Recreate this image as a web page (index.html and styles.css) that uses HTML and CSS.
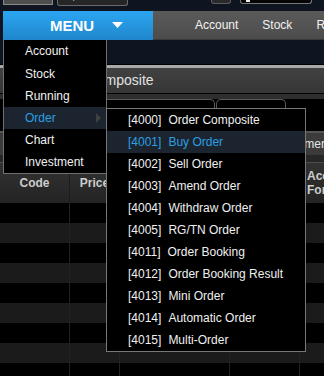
FILE: index.html
```html
<!DOCTYPE html>
<html lang="en">
<head>
  <meta charset="UTF-8">
  <meta name="viewport" content="width=device-width, initial-scale=1.0">
  <title>Order Composite</title>
  <link rel="stylesheet" href="styles.css">
</head>
<body>
  <div class="top-strip">
    <div class="search-input"></div>
    <div class="search-btn">
      <svg width="9" height="9" viewBox="0 0 9 9"><circle cx="3.6" cy="3.6" r="2.6" fill="none" stroke="#fff" stroke-width="1.4"/><path d="M5.5 5.5 L8.3 8.3" stroke="#fff" stroke-width="1.6"/></svg>
      <span>Search</span>
    </div>
    <div class="small-btn">...</div>
    <div class="top-input"><span class="caret"></span></div>
  </div>

  <div class="menubar">
    <div class="menu-btn">
      <span>MENU</span>
      <svg width="11" height="6" viewBox="0 0 11 6"><path d="M0 0 H11 L5.5 6 Z" fill="#fff"/></svg>
    </div>
    <div class="bar-links">
      <span class="bar-link">Account</span>
      <span class="bar-link">Stock</span>
      <span class="bar-link">Running</span>
    </div>
  </div>

  <div class="window">
    <div class="win-title">Order Composite</div>
    <div class="tabs">
      <div class="tab tab-a"></div>
      <div class="tab tab-b"></div>
      <div class="tab tab-c"></div>
    </div>
    <div class="toolbar"><span class="field-label">Customer</span></div>
    <div class="sep"></div>
    <div class="grid-head">
      <div class="col c1">Code</div>
      <div class="col c2">Price</div>
      <div class="col c3"></div>
      <div class="col c4"></div>
      <div class="col c5 left">Acc<br>For</div>
    </div>
    <div class="rows">
      <div class="row"><div class="cell c1"></div><div class="cell c2"></div><div class="cell c3"></div><div class="cell c4"></div><div class="cell c5"></div></div>
      <div class="row"><div class="cell c1"></div><div class="cell c2"></div><div class="cell c3"></div><div class="cell c4"></div><div class="cell c5"></div></div>
      <div class="row"><div class="cell c1"></div><div class="cell c2"></div><div class="cell c3"></div><div class="cell c4"></div><div class="cell c5"></div></div>
      <div class="row"><div class="cell c1"></div><div class="cell c2"></div><div class="cell c3"></div><div class="cell c4"></div><div class="cell c5"></div></div>
      <div class="row"><div class="cell c1"></div><div class="cell c2"></div><div class="cell c3"></div><div class="cell c4"></div><div class="cell c5"></div></div>
      <div class="row"><div class="cell c1"></div><div class="cell c2"></div><div class="cell c3"></div><div class="cell c4"></div><div class="cell c5"></div></div>
      <div class="row"><div class="cell c1"></div><div class="cell c2"></div><div class="cell c3"></div><div class="cell c4"></div><div class="cell c5"></div></div>
      <div class="row"><div class="cell c1"></div><div class="cell c2"></div><div class="cell c3"></div><div class="cell c4"></div><div class="cell c5"></div></div>
      <div class="row"><div class="cell c1"></div><div class="cell c2"></div><div class="cell c3"></div><div class="cell c4"></div><div class="cell c5"></div></div>
    </div>
  </div>

  <!-- main dropdown -->
  <ul class="dropdown">
    <li>Account</li>
    <li>Stock</li>
    <li>Running</li>
    <li class="active">Order<span class="arrow"></span></li>
    <li>Chart</li>
    <li>Investment</li>
  </ul>

  <!-- order submenu -->
  <ul class="submenu">
    <li><span class="code">[4000]</span>Order Composite</li>
    <li class="active"><span class="code">[4001]</span>Buy Order</li>
    <li><span class="code">[4002]</span>Sell Order</li>
    <li><span class="code">[4003]</span>Amend Order</li>
    <li><span class="code">[4004]</span>Withdraw Order</li>
    <li><span class="code">[4005]</span>RG/TN Order</li>
    <li><span class="code">[4011]</span>Order Booking</li>
    <li><span class="code">[4012]</span>Order Booking Result</li>
    <li><span class="code">[4013]</span>Mini Order</li>
    <li><span class="code">[4014]</span>Automatic Order</li>
    <li><span class="code">[4015]</span>Multi-Order</li>
  </ul>
</body>
</html>
```

FILE: styles.css
```css
body {
  margin: 0;
  width: 324px;
  height: 376px;
  overflow: hidden;
  position: relative;
  background-color: #0f1520;
  font-family: 'Liberation Sans', Arial, sans-serif;
  font-size: 12px;
  color: #f0f0f0;
}

/* top strip, mostly scrolled out of view */
.top-strip {
  height: 11px;
  display: flex;
  align-items: flex-end;
  overflow: hidden;
}
.search-input {
  margin-left: 3px;
  width: 48px;
  height: 20px;
  margin-bottom: 6px;
  background: #4e4e4e;
  border: 1px solid #8a8a8a;
  border-top: none;
}
.search-btn {
  margin-left: 4px;
  width: 71px;
  height: 22px;
  margin-bottom: 5px;
  background: #262626;
  border: 1px solid #6a6a6a;
  border-top: none;
  border-radius: 0 0 3px 3px;
  display: flex;
  align-items: flex-end;
  justify-content: center;
  gap: 3px;
  padding-bottom: 4px;
  box-sizing: border-box;
  line-height: 12px;
  font-size: 13px;
}
.small-btn {
  margin-left: 83px;
  width: 18px;
  height: 20px;
  margin-bottom: 7px;
  background: #2a2a2a;
  border: 1px solid #5c5c5c;
  border-top: none;
  border-radius: 0 0 3px 3px;
  font-size: 10px;
  line-height: 12px;
  text-align: center;
  color: #ccc;
}
.top-input {
  margin-left: 9px;
  width: 70px;
  height: 20px;
  margin-bottom: 7px;
  background: #050505;
  border: 1px solid #777;
  border-top: none;
  border-radius: 0 0 3px 3px;
  position: relative;
}
.caret {
  position: absolute;
  left: 5px;
  bottom: 1px;
  width: 4px;
  height: 3px;
  background: #eee;
}

/* menu bar */
.menubar {
  height: 29px;
  display: flex;
  padding-left: 3px;
}
.menu-btn {
  width: 150px;
  background: linear-gradient(#2ca6f2, #1f86cc);
  display: flex;
  align-items: center;
  padding-left: 47px;
  box-sizing: border-box;
  gap: 18px;
  font-size: 15px;
  font-weight: bold;
  color: #fff;
}
.menu-btn svg {
  margin-top: -1px;
}
.bar-links {
  flex: 1;
  display: flex;
  align-items: center;
  padding-left: 30px;
  background: linear-gradient(#5a5a5a, #4c4c4c);
  border-bottom: 1px solid #3a3a3a;
  white-space: nowrap;
  overflow: hidden;
}
.bar-link {
  padding: 0 12px;
  color: #f2f2f2;
}

/* window behind the menus */
.window {
  margin-top: 24px;
  border-top: 1px solid #000;
  overflow: hidden;
}
.win-title {
  border-top: 3px solid #a9a9a9;
  height: 25px;
  line-height: 25px;
  padding-left: 47px;
  font-size: 14px;
  color: #e2e2e2;
  background: linear-gradient(#414141, #363636);
  border-bottom: 1px solid #000;
}
.tabs {
  height: 37px;
  display: flex;
  gap: 1px;
  padding-left: 5px;
  background: linear-gradient(#2e2e2e 0 5px, #000 5px);
}
.tab {
  margin-top: 5px;
  background: #000;
  border: 1px solid #575757;
  border-bottom: none;
  border-radius: 5px 5px 0 0;
}
.tab-a { width: 90px; }
.tab-b { width: 115px; }
.tab-c { width: 68px; }

.toolbar {
  height: 22px;
  border-top: 2px solid #555;
  background: #3b3b3b;
  padding-left: 273px;
  line-height: 22px;
  color: #e6e6e6;
  white-space: nowrap;
}
.sep {
  height: 7px;
  background: #272727;
  border-bottom: 1px solid #4c4c4c;
}

/* grid */
.grid-head,
.row {
  display: flex;
  width: 380px;
}
.grid-head {
  height: 40px;
  background: linear-gradient(#323232, #242424);
  font-weight: bold;
  color: #cdcdcd;
}
.col {
  display: flex;
  align-items: center;
  justify-content: center;
  text-align: center;
  border-right: 1px solid #1c1c1c;
  box-sizing: border-box;
  line-height: 14px;
  overflow: hidden;
  white-space: nowrap;
}
.col.left {
  justify-content: flex-start;
  text-align: left;
  padding-left: 7px;
}
.c1 { width: 70px; }
.c2 { width: 50px; }
.c3 { width: 110px; }
.c4 { width: 70px; }
.c5 { width: 80px; }

.row {
  height: 20px;
  background: #000;
}
.row:nth-child(even) {
  background: #1b1b1b;
}
.cell {
  border-right: 1px solid #222;
  box-sizing: border-box;
}

/* dropdown menus */
.dropdown,
.submenu {
  position: absolute;
  margin: 0;
  padding: 0;
  list-style: none;
  background: #000;
  box-sizing: border-box;
}
.dropdown {
  left: 3px;
  top: 40px;
  width: 104px;
  border: 1px solid #707070;
  border-top: none;
}
.submenu {
  left: 106px;
  top: 108px;
  width: 200px;
  border: 1px solid #777;
}
.dropdown li,
.submenu li {
  height: 22px;
  line-height: 22px;
  padding-left: 21px;
  white-space: nowrap;
  position: relative;
}
.dropdown li:first-child {
  height: 23px;
  line-height: 23px;
}
.dropdown li.active,
.submenu li.active {
  background: #1c252f;
  color: #2b9fe2;
}
.arrow {
  position: absolute;
  left: 92px;
  top: 6px;
  width: 0;
  height: 0;
  border-top: 5px solid transparent;
  border-bottom: 5px solid transparent;
  border-left: 5px solid #414141;
}
.code {
  display: inline-block;
  margin-right: 7px;
}
```
